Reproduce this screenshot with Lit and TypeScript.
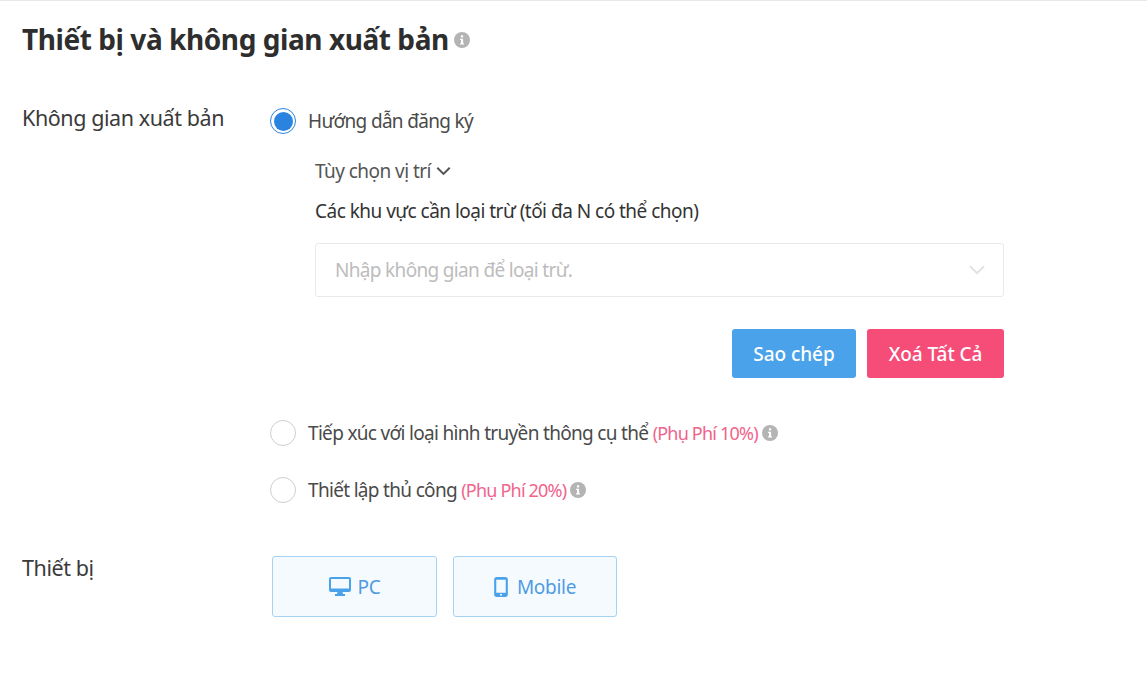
import { LitElement, css, html } from 'lit';
import { customElement } from 'lit/decorators.js';

const info = html`<svg class="info" viewBox="0 0 16 16"><circle cx="8" cy="8" r="8" fill="#b4b4b4"></circle><rect x="6.9" y="3.2" width="2.3" height="2.2" rx=".6" fill="#fff"></rect><path d="M6 6.7h3.1v4.6H10v1.2H6.1v-1.2h.9V7.9H6z" fill="#fff"></path></svg>`;

@customElement('app-root')
export class AppRoot extends LitElement {
  override render() {
    return html`
      <div class="page">
        <h1><span>Thiết bị và không gian xuất bản</span>${info}</h1>

        <div class="row placement">
          <div class="label">Không gian xuất bản</div>
          <div class="body">
            <div class="option">
              <span class="radio checked"></span>
              <span>Hướng dẫn đăng ký</span>
            </div>
            <div class="details">
              <div class="toggle">
                Tùy chọn vị trí
                <svg viewBox="0 0 14 9" width="15" height="10"><path d="M1.2 1.400 7 7.200l5.800-5.800" fill="none" stroke="#555" stroke-width="1.900"></path></svg>
              </div>
              <div class="exclude">Các khu vực cần loại trừ (tối đa N có thể chọn)</div>
              <div class="select">
                <span>Nhập không gian để loại trừ.</span>
                <svg viewBox="0 0 16 10" width="16" height="10"><path d="M1 1.200 8 8.200l7-7" fill="none" stroke="#e2e2e2" stroke-width="2"></path></svg>
              </div>
              <div class="actions">
                <button class="copy" type="button">Sao chép</button>
                <button class="clear" type="button">Xoá Tất Cả</button>
              </div>
            </div>
            <div class="option media">
              <span class="radio"></span>
              <span>Tiếp xúc với loại hình truyền thông cụ thể <em>(Phụ Phí 10%)</em></span>
              ${info}
            </div>
            <div class="option manual">
              <span class="radio"></span>
              <span>Thiết lập thủ công <em>(Phụ Phí 20%)</em></span>
              ${info}
            </div>
          </div>
        </div>

        <div class="row devices">
          <div class="label">Thiết bị</div>
          <div class="device-list">
            <button class="device" type="button">
              <svg viewBox="0 0 22 19" width="22" height="19"><path fill-rule="evenodd" d="M2 0h18a2 2 0 0 1 2 2v11a2 2 0 0 1-2 2h-6.500l.5 2h2v2H6v-2h2l.5-2H2a2 2 0 0 1-2-2V2a2 2 0 0 1 2-2Zm0 2v9.500h18V2Z" fill="#4aa3ea"></path></svg>
              PC
            </button>
            <button class="device mobile" type="button">
              <svg viewBox="0 0 13 19" width="14" height="20"><path fill-rule="evenodd" d="M2.500 0h8A2.500 2.500 0 0 1 13 2.500v14a2.500 2.500 0 0 1-2.500 2.500h-8A2.500 2.500 0 0 1 0 16.500v-14A2.500 2.500 0 0 1 2.500 0ZM2 2.500V15h9V2.500Zm4.500 13.300a1 1 0 1 0 0 2 1 1 0 0 0 0-2Z" fill="#4aa3ea"></path></svg>
              Mobile
            </button>
          </div>
        </div>
      </div>
    `;
  }

  static override styles = css`
    :host {
      display: block;
      min-height: 688px;
      background: #fff;
      color: #333;
      font-family: 'Noto Sans', sans-serif;
    }

    .page {
      border-top: 1px solid #e8e8e8;
      padding: 18px 22px 0;
    }

    h1 {
      display: flex;
      align-items: center;
      gap: 1px;
      margin: 0 0 45px;
      height: 42px;
      font-size: 28px;
      line-height: 40px;
      font-weight: 700;
      letter-spacing: -0.43px;
      color: #2e2e2e;
    }

    h1 span {
      height: 42px;
    }

    .row {
      display: flex;
    }

    .label {
      width: 248px;
      flex: none;
      margin-top: -2px;
      font-size: 21.5px;
      line-height: 28px;
      letter-spacing: -0.42px;
      color: #3a3a3a;
    }

    .body {
      padding-top: 1px;
    }

    .option {
      display: flex;
      align-items: center;
      height: 28px;
      font-size: 19px;
      color: #4a4a4a;
      letter-spacing: -0.68px;
    }

    .radio {
      width: 26px;
      height: 26px;
      flex: none;
      box-sizing: border-box;
      margin-right: 12px;
      border: 1.5px solid #cfcfcf;
      border-radius: 50%;
      background: #fff;
    }

    .radio.checked {
      border-color: #2b83e0;
      padding: 2.5px;
      background: #2b83e0 content-box;
    }

    em {
      font-style: normal;
      font-size: 18px;
      letter-spacing: -0.8px;
      color: #f0648c;
    }

    .info {
      width: 16px;
      height: 16px;
      flex: none;
      margin-left: 4px;
    }

    .details {
      margin: 0 0 41px 45px;
      width: 689px;
    }

    .toggle {
      display: flex;
      align-items: center;
      gap: 5px;
      margin-top: 22px;
      height: 28px;
      font-size: 19px;
      color: #555;
      letter-spacing: -0.55px;
    }

    .exclude {
      margin-top: 12px;
      height: 28px;
      font-size: 19px;
      line-height: 28px;
      color: #333;
      letter-spacing: -0.52px;
    }

    .select {
      display: flex;
      align-items: center;
      justify-content: space-between;
      box-sizing: border-box;
      height: 54px;
      margin-top: 18px;
      padding: 0 18px 0 19px;
      border: 1px solid #e9e9e9;
      border-radius: 3px;
      font-size: 19px;
      color: #bcbcbc;
      letter-spacing: -0.67px;
    }

    .actions {
      display: flex;
      justify-content: flex-end;
      gap: 11px;
      margin-top: 32px;
    }

    .actions button {
      height: 49px;
      border: 0;
      border-radius: 3px;
      color: #fff;
      font: 500 19px 'Noto Sans', sans-serif;
      letter-spacing: -0.05px;
      cursor: pointer;
    }

    .copy {
      width: 124px;
      background: #4aa3ea;
    }

    .clear {
      width: 137px;
      background: #f54d78;
    }

    .media {
      margin-bottom: 29px;
    }

    .devices {
      margin-top: 52px;
    }

    .device-list {
      display: flex;
      gap: 16px;
      margin-left: 2px;
    }

    .device {
      display: flex;
      align-items: center;
      justify-content: center;
      gap: 7px;
      box-sizing: border-box;
      width: 165px;
      height: 61px;
      border: 1px solid #a6d2f3;
      border-radius: 3px;
      background: #f5faff;
      color: #4f9be3;
      font: 19px 'Noto Sans', sans-serif;
      letter-spacing: -0.3px;
      cursor: pointer;
    }

    .device.mobile {
      width: 164px;
      gap: 9px;
    }
  `;
}
